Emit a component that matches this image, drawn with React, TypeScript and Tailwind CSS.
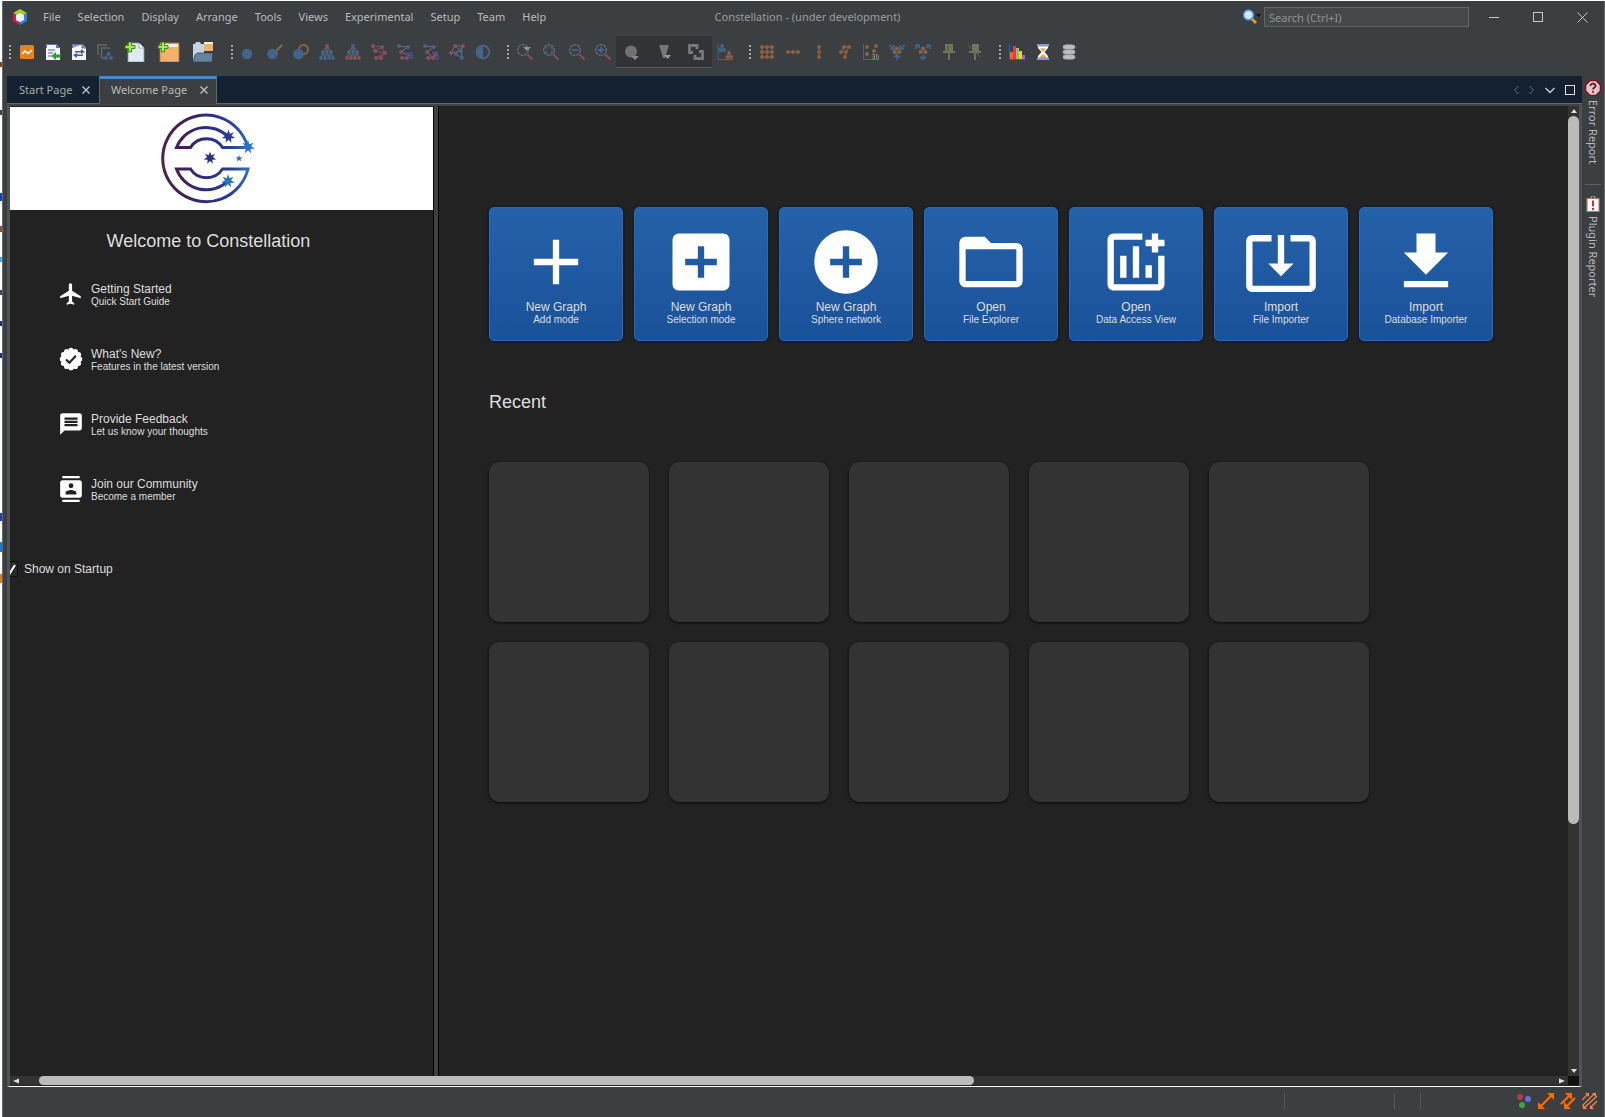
import React from 'react';

type Dot = [number, number, string?];

const BLUE = '#45638d';
const PINK = '#8b5060';
const BROWN = '#8a6142';

function Svg({ children, size = 'size-4', box = '0 0 16 16' }: { children: React.ReactNode; size?: string; box?: string }) {
  return (
    <svg className={`${size} shrink-0`} viewBox={box} fill="none" aria-hidden="true">
      {children}
    </svg>
  );
}

function Network({ dots, links, line = '#6d7275', r = 1.9 }: { dots: Dot[]; links?: string; line?: string; r?: number }) {
  return (
    <>
      {links && <path d={links} stroke={line} strokeWidth="1" />}
      {dots.map(([x, y, c], i) => (
        <circle key={i} cx={x} cy={y} r={r} fill={c ?? BROWN} />
      ))}
    </>
  );
}

function Lens({ children }: { children?: React.ReactNode }) {
  return (
    <Svg>
      <path d="M10.500 10.500l5 5" stroke={PINK} strokeWidth="1.800" />
      <circle cx="6" cy="6" r="5.300" stroke="#68717d" strokeWidth="1.200" strokeDasharray="3 0.8" />
      {children}
    </Svg>
  );
}

const treeLinks = 'M8 2L4 8L2 14M8 2l4 6l2 6M8 2v6M8 8l-2 6M8 8l2 6M4 8l2 6M12 8l-2 6';

const fileIcons = [
  {
    label: 'Open graph view',
    icon: (
      <Svg>
        <rect x="1" y="1" width="14" height="14" rx="1.500" fill="#e8821e" />
        <path d="M3 10l3-3 3 2.500L13 6" stroke="#fff" strokeWidth="1.400" />
      </Svg>
    ),
  },
  {
    label: 'Import document',
    icon: (
      <Svg>
        <path d="M1 0h10l4 4v12H1z" fill="#f4f5fa" />
        <path d="M1.500 4V.5H11l3.500 3.500" stroke="#6470a8" />
        <path d="M11 0v4h4" fill="#6470a8" />
        <path d="M3 6h7M3 9h5M3 12h4" stroke="#5c67a0" strokeWidth="1.200" />
        <path d="M16 10.500h-5V8L6.500 12 11 16v-2.500h5z" fill="#2ba02b" />
      </Svg>
    ),
  },
  {
    label: 'Convert document',
    icon: (
      <Svg>
        <path d="M1 0h10l4 4v12H1z" fill="#f4f5fa" />
        <path d="M11 0v4h4M1.500 4V.5H11" stroke="#6470a8" fill="#8c95c0" />
        <path d="M4 7h6V5l4 3-4 2V8.500H4zM12 12H6v2l-4-3 4-2v1.500h6z" fill="#4c5796" />
      </Svg>
    ),
  },
  {
    label: 'Copy schema',
    icon: (
      <Svg>
        <path d="M1 11V1h9M4.500 14V4H13M4.500 14H8" stroke="#65686b" strokeWidth="1.500" />
        <Network r={2} dots={[[11.5, 10, BLUE], [9, 14, BLUE], [14, 14, BLUE]]} />
      </Svg>
    ),
  },
];

const plusBadge = <path d="M3.500 0h3v3.500H10v3H6.500V10h-3V6.500H0v-3h3.500z" fill="#a6e85a" stroke="#3d8c14" strokeWidth="1" />;

const bigIcons = [
  {
    label: 'New graph',
    icon: (
      <Svg size="size-5" box="0 0 20 20">
        <path d="M3 1h11l5 5v14H3z" fill="#dfeaf2" stroke="#8b9aa4" strokeWidth=".8" />
        <path d="M14 1v5h5" fill="#f8fbfd" stroke="#8b9aa4" strokeWidth=".8" />
        {plusBadge}
      </Svg>
    ),
  },
  {
    label: 'New project',
    icon: (
      <Svg size="h-5 w-[22px]" box="0 0 22 20">
        <path d="M2 1h19v19H2z" fill="#f0b268" stroke="#b17a3a" strokeWidth=".8" />
        <path d="M3 2h17v3H3z" fill="#fff0d6" />
        {plusBadge}
      </Svg>
    ),
  },
  {
    label: 'Open project',
    icon: (
      <Svg size="h-5 w-[22px]" box="0 0 22 20">
        <path d="M1 19V2h2l1-2h4l1 2h3v17z" fill="#c7d3e2" />
        <path d="M12 0h9v9h-9z" fill="#f0b468" />
        <path d="M12 0h9v2h-9z" fill="#fff0d6" />
        <path d="M1 20l2-7 2-2h16l-1 9z" fill="#67849e" stroke="#2d4253" strokeWidth=".7" />
      </Svg>
    ),
  },
];

const graphIcons = [
  { label: 'Add nodes', icon: <Svg><circle cx="6" cy="10" r="5.300" fill={BLUE} /></Svg> },
  {
    label: 'Add transactions',
    icon: <Svg><path d="M7 9l8-8" stroke="#8c6a48" strokeWidth="1.800" /><circle cx="5.500" cy="10" r="5.300" fill={BLUE} /></Svg>,
  },
  {
    label: 'Add loops',
    icon: <Svg><circle cx="10.500" cy="5.500" r="4.500" stroke={BROWN} strokeWidth="2" /><circle cx="5.500" cy="10" r="5.300" fill={BLUE} /></Svg>,
  },
  {
    label: 'Select all',
    icon: <Svg><Network links={treeLinks} dots={[[8, 2, PINK], [4, 8, BLUE], [8, 8, BLUE], [12, 8, BLUE], [2, 14, BLUE], [6, 14, BLUE], [10, 14, BLUE], [14, 14, BLUE]]} /></Svg>,
  },
  {
    label: 'Select leaves',
    icon: <Svg><Network links={treeLinks} dots={[[8, 2, BLUE], [4, 8, BLUE], [8, 8, BLUE], [12, 8, BLUE], [2, 14, PINK], [6, 14, PINK], [10, 14, PINK], [14, 14, PINK]]} /></Svg>,
  },
  {
    label: 'Select neighbours',
    icon: <Svg><Network line={PINK} links="M2 2l9 1 3 6-4 5H5l9-5L4 7l7-4M2 2l2 5" dots={[[2, 2, PINK], [11, 3, PINK], [4, 7, PINK], [14, 9, PINK], [5, 14, PINK], [10, 14, PINK]]} /></Svg>,
  },
  {
    label: 'Select component',
    icon: <Svg><Network links="M2 2l9 1M4 8l10 4M5 14h5M4 8l7-5" dots={[[2, 2, BLUE], [11, 3, BLUE], [4, 8, PINK], [5, 14, PINK], [10, 14, PINK]]} /><circle cx="13" cy="11.500" r="2.400" stroke="#4b4f9a" strokeWidth="1.500" /></Svg>,
  },
  {
    label: 'Select backbone',
    icon: <Svg><Network links="M2 2l9 1M4 8l7-5M4 8l6 6M5 14h5" dots={[[2, 2, BLUE], [11, 3, BLUE], [4, 8, PINK], [5, 14, PINK], [10, 14, PINK], [12, 11, PINK]]} /><path d="M9 8.500h5v5M12 15h4v-4" stroke="#4b4f9a" strokeWidth="1.500" /></Svg>,
  },
  {
    label: 'Select path',
    icon: <Svg><Network links="M6 2L2 9l10-2M14 2L7 10l6 4M6 2l6 5 2-5M12 7l1 7M6 2h8" dots={[[6, 2, PINK], [14, 2, PINK], [2, 9, PINK], [12, 7, BLUE], [7, 10, BLUE], [13, 14, BLUE]]} /></Svg>,
  },
  {
    label: 'Invert selection',
    icon: <Svg><circle cx="8" cy="8" r="6.300" stroke={BLUE} strokeWidth="2" /><path d="M8 1a7 7 0 0 0 0 14z" fill={BLUE} /></Svg>,
  },
];

const zoomIcons = [
  { label: 'Reset view', icon: <Lens><path d="M6 3h8l-4 4z" fill="#8c8f91" /></Lens> },
  { label: 'Zoom to selection', icon: <Lens><path d="M3 5V3h2M7 3h2v2M9 7v2H7M5 9H3V7" stroke="#4c5f96" strokeWidth="1.200" /></Lens> },
  { label: 'Zoom out', icon: <Lens><path d="M3 6h6" stroke="#4c5f96" strokeWidth="1.800" /></Lens> },
  { label: 'Zoom in', icon: <Lens><path d="M3 6h6M6 3v6" stroke="#4c5f96" strokeWidth="1.800" /></Lens> },
];

const drawIcons = [
  { label: 'Draw nodes', icon: <Svg><circle cx="7" cy="7.500" r="6" fill="#717171" /><path d="M7 12h8l-4 4z" fill="#8b8b8b" /></Svg> },
  { label: 'Draw blazes', icon: <Svg><path d="M3 1h10L9 14H7z" fill="#767676" /><path d="M8 11h7l-3.500 4z" fill="#9a9a9a" /></Svg> },
  { label: 'Draw connections', icon: <Svg><path d="M5 8.500H1.500v-7h7.500V5M7 11v3.500h7.500v-7H11" stroke="#777" strokeWidth="2.800" /></Svg> },
];

const plotIcon = (
  <Svg>
    <path d="M1 0v15.500h15" stroke={BLUE} />
    <Network links="M5 2v6M12 9v5" dots={[[5, 2, BLUE], [3, 6, BLUE], [7, 6, BLUE], [12, 9], [10.5, 13], [14, 13]]} />
  </Svg>
);

const layoutIcons = [
  {
    label: 'Arrange in grid',
    icon: <Svg><Network r={2} line={BROWN} links="M3 3h10v10H3zM8 3v10M3 8h10" dots={[[3, 3], [8, 3], [13, 3], [3, 8], [8, 8], [13, 8], [3, 13], [8, 13], [13, 13]]} /></Svg>,
  },
  { label: 'Arrange in row', icon: <Svg><Network r={2} line={BROWN} links="M2 8h12" dots={[[3, 8], [8, 8], [13, 8]]} /></Svg> },
  { label: 'Arrange in column', icon: <Svg><Network r={2} line={BROWN} links="M8 2v12" dots={[[8, 3], [8, 8], [8, 13]]} /></Svg> },
  { label: 'Arrange in tree', icon: <Svg><Network r={2} line={BROWN} links="M12 3L9 8M8 3h4M7 3L4 8h5l-1 5" dots={[[7, 3], [12, 3], [4, 8], [9, 8], [8, 13]]} /></Svg> },
  {
    label: 'Arrange in 3D',
    icon: (
      <Svg>
        <path d="M.5 0v15.500H16" stroke={BLUE} />
        <Network r={2} dots={[[4, 3], [13, 2], [11, 7], [4, 10]]} />
        <path d="M9 10.500h2.500v4.500H9M9.500 12.800h2M13.500 10.500v4.500h1l1-1v-2.500l-1-1z" stroke="#84878a" />
      </Svg>
    ),
  },
  {
    label: 'Contract graph',
    icon: <Svg><Network r={2} dots={[[8, 4.5], [5.5, 8], [10.5, 8]]} links="M5 8h6" line={BROWN} /><path d="M0 1l4 3M16 1l-4 3M1 5h4V1M15 5h-4V1M8 16v-5M5 13.500l3-3 3 3" stroke={BLUE} strokeWidth="1.600" /></Svg>,
  },
  {
    label: 'Expand graph',
    icon: <Svg><Network r={2} dots={[[8, 4.5], [5.5, 8], [10.5, 8]]} links="M5 8h6" line={BROWN} /><path d="M1 1l4 3M15 1l-4 3M1 5V1h4M15 5V1h-4M8 11v4M5 12.500l3 3 3-3" stroke={BLUE} strokeWidth="1.600" /></Svg>,
  },
  { label: 'Pin nodes', icon: <Svg><path d="M8 9v7" stroke="#777a7c" strokeWidth="1.600" /><path d="M4 0h8v7h2v2H2V7h2z" fill="#70755a" /><path d="M7 2v5" stroke="#464a3a" /></Svg> },
  { label: 'Unpin nodes', icon: <Svg><path d="M8 9v7" stroke="#777a7c" strokeWidth="1.600" /><path d="M5 0h7v7h2v2H2V7h3z" fill="#70755a" /><path d="M1 1l12 12" stroke={PINK} /></Svg> },
];

const viewIcons = [
  {
    label: 'Histogram',
    icon: (
      <Svg>
        <path d="M1 8h3v7H1z" fill="#ff6a00" /><path d="M4 2h3v13H4z" fill="#e8306a" /><path d="M7 4h3v11H7z" fill="#9bbf5a" />
        <path d="M10 7h3v8h-3z" fill="#e6d62c" /><path d="M13 11h3v4h-3z" fill="#a35fe0" /><path d="M.5 0v15.500H16" stroke="#2458d8" />
      </Svg>
    ),
  },
  {
    label: 'Timeline',
    icon: (
      <Svg>
        <path d="M3 2h10v2L9.500 8 13 12v2H3v-2l3.500-4L3 4z" fill="#fff" /><path d="M5 4.500h6L8 8zM4 14l4-4 4 4z" fill="#f09a4a" />
        <path d="M2 0h12v2.500H2zM2 13.500h12V16H2z" fill="#9494cc" />
      </Svg>
    ),
  },
  {
    label: 'Data access',
    icon: (
      <Svg>
        {[1, 6, 11].map((y) => (
          <path key={y} d={`M2 ${y + 1}c0-2 12-2 12 0v2c0 2-12 2-12 0z`} fill="#b9bcc0" stroke="#7e8286" strokeWidth=".6" />
        ))}
      </Svg>
    ),
  },
];

const ICONS = {
  add: 'M19 13h-6v6h-2v-6H5v-2h6V5h2v6h6z',
  addBox: 'M19 3H5a2 2 0 0 0-2 2v14a2 2 0 0 0 2 2h14c1.100 0 2-.9 2-2V5c0-1.100-.9-2-2-2zm-2 10h-4v4h-2v-4H7v-2h4V7h2v4h4z',
  addCircle: 'M12 2C6.480 2 2 6.480 2 12s4.480 10 10 10 10-4.480 10-10S17.520 2 12 2zm5 11h-4v4h-2v-4H7v-2h4V7h2v4h4z',
  folder: 'M20 6h-8l-2-2H4c-1.100 0-1.990.9-1.990 2L2 18c0 1.100.9 2 2 2h16c1.100 0 2-.9 2-2V8c0-1.100-.9-2-2-2zm0 12H4V8h16z',
  chart: 'M14 3H5c-1.100 0-2 .9-2 2v14c0 1.100.9 2 2 2h14c1.100 0 2-.9 2-2v-9h-2v9H5V5h9zM7 10h2v7H7zM11 7h2v10h-2zM15 13h2v4h-2zM17 3h2v2h2v2h-2v2h-2V7h-2V5h2z',
  importFile: 'M12 16.500l4-4h-3v-9h-2v9H8zm9-13h-6v1.990h6v14.030H3V5.490h6V3.500H3c-1.100 0-2 .9-2 2v14c0 1.100.9 2 2 2h18c1.100 0 2-.9 2-2v-14c0-1.100-.9-2-2-2z',
  download: 'M19 9h-4V3H9v6H5l7 7zM5 18v2h14v-2z',
  flight: 'M21 16v-2l-8-5V3.500c0-.83-.67-1.500-1.500-1.500S10 2.670 10 3.500V9l-8 5v2l8-2.500V19l-2 1.500V22l3.500-1 3.500 1v-1.500L13 19v-5.500z',
  message: 'M20 2H4c-1.100 0-1.990.9-1.990 2L2 22l4-4h14c1.100 0 2-.9 2-2V4c0-1.100-.9-2-2-2zm-2 12H6v-2h12zm0-3H6V9h12zm0-3H6V6h12z',
  contacts:
    'M20 0H4v2h16zM4 24h16v-2H4zM20 4H4c-1.100 0-2 .9-2 2v12c0 1.100.9 2 2 2h16c1.100 0 2-.9 2-2V6c0-1.100-.9-2-2-2zm-8 2.750a2.250 2.250 0 1 1 0 4.500 2.250 2.250 0 0 1 0-4.500zM17 17H7v-1.500c0-1.670 3.330-2.500 5-2.500s5 .83 5 2.500z',
};

const actions = [
  { title: 'New Graph', sub: 'Add mode', d: ICONS.add },
  { title: 'New Graph', sub: 'Selection mode', d: ICONS.addBox },
  { title: 'New Graph', sub: 'Sphere network', d: ICONS.addCircle },
  { title: 'Open', sub: 'File Explorer', d: ICONS.folder },
  { title: 'Open', sub: 'Data Access View', d: ICONS.chart },
  { title: 'Import', sub: 'File Importer', d: ICONS.importFile },
  { title: 'Import', sub: 'Database Importer', d: ICONS.download },
];

function solid(d: string) {
  return <path d={d} fill="#fff" />;
}

const verified = (
  <>
    <circle cx="12" cy="12" r="9" fill="#fff" />
    {Array.from({ length: 12 }, (_, i) => (
      <circle key={i} cx={12 + 8 * Math.cos((i * Math.PI) / 6)} cy={12 + 8 * Math.sin((i * Math.PI) / 6)} r="2.400" fill="#fff" />
    ))}
    <path d="M7.500 12.500l3 3 6-6.500" stroke="#222" strokeWidth="2" />
  </>
);

const links = [
  { title: 'Getting Started', sub: 'Quick Start Guide', icon: solid(ICONS.flight) },
  { title: "What's New?", sub: 'Features in the latest version', icon: verified },
  { title: 'Provide Feedback', sub: 'Let us know your thoughts', icon: solid(ICONS.message) },
  { title: 'Join our Community', sub: 'Become a member', icon: solid(ICONS.contacts) },
];

const menus = ['File', 'Selection', 'Display', 'Arrange', 'Tools', 'Views', 'Experimental', 'Setup', 'Team', 'Help'];

function star(cx: number, cy: number, r: number, points: number) {
  return Array.from({ length: points * 2 }, (_, i) => {
    const a = (i * Math.PI) / points - Math.PI / 2;
    const q = i % 2 ? r * 0.45 : r;
    return `${(cx + q * Math.cos(a)).toFixed(2)},${(cy + q * Math.sin(a)).toFixed(2)}`;
  }).join(' ');
}

function Logo() {
  return (
    <svg className="h-[92px] w-[94px]" viewBox="0 0 94 92" fill="none" role="img" aria-label="Constellation">
      <defs>
        <linearGradient id="brand" gradientUnits="userSpaceOnUse" x1="0" y1="0" x2="92" y2="0">
          <stop offset="0" stopColor="#4f2450" />
          <stop offset=".22" stopColor="#43204f" />
          <stop offset=".5" stopColor="#2c2c80" />
          <stop offset=".75" stopColor="#2b3c92" />
          <stop offset="1" stopColor="#2c7cc2" />
        </linearGradient>
      </defs>
      <g stroke="url(#brand)" strokeWidth="3">
        <path d="M86.500 33A43.300 43.300 0 1 0 87 56H61.500A19 19 0 0 1 29.500 56H15.500A31.500 31.500 0 0 0 67 68" />
        <path d="M67 23.500A31.500 31.500 0 0 0 15.500 34.500H29.500A19 19 0 0 1 61.500 34.500H86" />
      </g>
      <g fill="url(#brand)">
        <polygon points={star(67.5, 23.5, 7, 7)} />
        <polygon points={star(49, 45, 6.5, 7)} />
      </g>
      <g fill="#2c74b8">
        <polygon points={star(87, 34, 7, 7)} />
        <polygon points={star(67, 68, 7, 7)} />
        <polygon points={star(78, 45.5, 3.5, 5)} />
      </g>
    </svg>
  );
}

function Grip({ first = false }: { first?: boolean }) {
  return (
    <div className={`flex shrink-0 flex-col items-end gap-0.5 pr-[3px] ${first ? 'w-[11px]' : 'w-4'}`}>
      {[0, 1, 2, 3].map((i) => (
        <span key={i} className="size-0.5 bg-[#a5a7a8]" />
      ))}
    </div>
  );
}

function Tools({ items, width = 'w-[26px]' }: { items: { label: string; icon: React.ReactNode }[]; width?: string }) {
  return (
    <>
      {items.map((t) => (
        <button key={t.label} type="button" aria-label={t.label} className={`flex h-8 shrink-0 items-center justify-center ${width}`}>
          {t.icon}
        </button>
      ))}
    </>
  );
}

function TabClose({ label }: { label: string }) {
  return (
    <button type="button" aria-label={`Close ${label}`}>
      <Svg size="size-2.5" box="0 0 10 10">
        <path d="M1.500 1.500l7 7M8.500 1.500l-7 7" stroke="#c4c4c4" strokeWidth="1.300" />
      </Svg>
    </button>
  );
}

const edgeMarks: [number, number, string][] = [
  [62, 5, '#7a4a22'], [110, 5, '#444'], [193, 8, '#1c3fb0'], [226, 6, '#8a5044'], [257, 5, '#53a7ea'], [290, 5, '#445'],
  [321, 5, '#27306e'], [353, 5, '#27306e'], [513, 8, '#2a40a8'], [542, 10, '#1f78c8'], [574, 9, '#c9812c'],
];

export default function App() {
  return (
    <div className="flex min-h-screen bg-white font-['Noto_Sans',sans-serif] text-[11px] leading-4 text-[#bbbbbb]">
      <svg className="w-0.5 shrink-0" aria-hidden="true">
        {edgeMarks.map(([y, h, c]) => (
          <rect key={y} x="0" y={y} width="2" height={h} fill={c} />
        ))}
      </svg>
      <div className="mt-px flex min-w-0 flex-1 flex-col border-r border-l border-[#66696b] bg-[#3c3f41]">
        <header className="grid h-8 grid-cols-[1fr_auto_1fr] items-center pl-2">
          <div className="flex items-center">
            <Svg size="size-[18px]" box="0 0 18 18">
              <path d="M9 1l7 4-7 4-7-4z" fill="#a9c92f" />
              <path d="M2 5l7 4v8l-7-4z" fill="#d8184f" />
              <path d="M16 5l-7 4v8l7-4z" fill="#2788dd" />
              <path d="M9 5l4 2v5l-4 2-4-2V7z" fill="#e6eef2" />
              <path d="M5 7l4 2v5l-4-2z" fill="#fff" />
            </Svg>
            <nav className="ml-3.5 flex gap-[17px]">
              {menus.map((m) => (
                <button key={m} type="button">{m}</button>
              ))}
            </nav>
          </div>
          <h1 className="text-center text-[#9a9c9d]">Constellation - (under development)</h1>
          <div className="flex items-center justify-end">
            <button type="button" aria-label="Search options" className="flex items-center">
              <Svg size="h-4 w-[22px]" box="0 0 22 16">
                <path d="M9 9l5 5" stroke="#e09a1c" strokeWidth="3" />
                <circle cx="6.500" cy="6" r="5" fill="#cfe8ff" stroke="#3d8ce0" strokeWidth="1.500" />
                <path d="M14 5h5l-2.500 3z" fill="#111" />
              </Svg>
            </button>
            <input
              type="text"
              aria-label="Search"
              placeholder="Search (Ctrl+I)"
              className="h-5 w-[205px] border border-[#646668] bg-[#45494a] px-1 text-[11px] outline-none placeholder:text-[#919394]"
            />
            <button type="button" aria-label="Minimize" className="ml-[13px] flex h-8 w-6 items-center justify-center">
              <span className="h-px w-2.5 bg-[#c8c8c8]" />
            </button>
            <button type="button" aria-label="Maximize" className="ml-5 flex h-8 w-6 items-center justify-center">
              <span className="size-2.5 border border-[#c8c8c8]" />
            </button>
            <button type="button" aria-label="Close" className="mr-2.5 ml-5 flex h-8 w-6 items-center justify-center">
              <Svg size="size-[11px]" box="0 0 11 11">
                <path d="M.5.5l10 10M10.500.5l-10 10" stroke="#c8c8c8" />
              </Svg>
            </button>
          </div>
        </header>

        <div role="toolbar" aria-label="Main toolbar" className="flex h-[43px] items-center pb-1.5">
          <Grip first />
          <Tools items={fileIcons} />
          <Tools items={bigIcons} width="w-[34px]" />
          <Grip />
          <Tools items={graphIcons} />
          <Grip />
          <Tools items={zoomIcons} />
          <div className="flex h-8 border-b border-[#5a5c5e] bg-[#313335]">
            <Tools items={drawIcons} width="w-8" />
          </div>
          <Tools items={[{ label: 'Scatter plot', icon: plotIcon }]} />
          <Grip />
          <Tools items={layoutIcons} />
          <Grip />
          <Tools items={viewIcons} />
        </div>

        <div className="flex flex-1">
          <div className="ml-1 flex min-w-0 flex-1 flex-col">
            <div className="flex h-7 items-stretch border-b border-[#646668] bg-[#132131]">
              <div className="flex w-[92px] items-center justify-between pr-2 pl-3 text-[#a8abae]">
                <button type="button">Start Page</button>
                <TabClose label="Start Page" />
              </div>
              <div className="-mb-px flex w-[118px] items-center justify-between border-x border-t-3 border-x-[#646668] border-t-[#4a88c7] bg-[#3c3f41] pr-[7px] pb-[3px] pl-[11px]">
                <button type="button">Welcome Page</button>
                <TabClose label="Welcome Page" />
              </div>
              <div className="ml-auto flex items-center gap-2.5 pr-[7px]">
                <button type="button" aria-label="Previous tab">
                  <Svg size="h-2.5 w-1.5" box="0 0 6 10"><path d="M5.500 1l-4 4 4 4" stroke="#6b747c" /></Svg>
                </button>
                <button type="button" aria-label="Next tab">
                  <Svg size="h-2.5 w-1.5" box="0 0 6 10"><path d="M.5 1l4 4-4 4" stroke="#6b747c" /></Svg>
                </button>
                <button type="button" aria-label="Tab list">
                  <Svg size="size-2.5" box="0 0 10 10"><path d="M.5 3L5 7.500 9.500 3" stroke="#d0d0d0" strokeWidth="1.300" /></Svg>
                </button>
                <button type="button" aria-label="Maximize window" className="size-2.5 border border-[#e0e0e0]" />
              </div>
            </div>

            <div className="grid flex-1 grid-cols-[minmax(0,1fr)_11px] grid-rows-[1fr_9px] border-x-3 border-t-2 border-b border-x-[#505254] border-t-[#444] border-b-white bg-[#222222] pb-px font-['Liberation_Sans',sans-serif] text-xs leading-[14px] text-[#dedede]">
              <main className="flex min-w-0">
                <aside className="mt-px w-[423px] shrink-0 overflow-hidden">
                  <div className="flex h-[103px] items-center justify-center bg-white pr-7">
                    <Logo />
                  </div>
                  <h2 className="mt-[19px] pr-[26px] text-center text-lg leading-6">Welcome to Constellation</h2>
                  <ul className="mt-7 flex flex-col gap-[38px] pl-12">
                    {links.map((l) => (
                      <li key={l.title}>
                        <a href="#" className="flex items-start gap-[7px]">
                          <Svg size="size-[26px]" box="0 0 24 24">{l.icon}</Svg>
                          <span className="pt-px">
                            <span className="block">{l.title}</span>
                            <span className="block text-[10px] leading-3">{l.sub}</span>
                          </span>
                        </a>
                      </li>
                    ))}
                  </ul>
                  <label className="mt-[58px] flex items-center gap-1.5">
                    <span className="-ml-2 grid size-4 rounded-xs border border-[#0d0d0d] bg-[#2b2b2b]">
                      <input type="checkbox" defaultChecked className="peer col-start-1 row-start-1 size-full appearance-none" />
                      <svg viewBox="0 0 14 14" className="col-start-1 row-start-1 hidden size-full peer-checked:block" fill="none" aria-hidden="true">
                        <path d="M4 7l3 4 5-8" stroke="#fff" strokeWidth="2" />
                      </svg>
                    </span>
                    Show on Startup
                  </label>
                </aside>
                <div role="separator" className="w-1.5 shrink-0 border-x border-black bg-[#3f3f3f]" />
                <section className="min-w-0 flex-1 overflow-hidden pt-[101px] pl-[50px]">
                  <div className="flex gap-[11px]">
                    {actions.map((a) => (
                      <button
                        key={a.sub}
                        type="button"
                        className="flex size-[134px] shrink-0 flex-col items-center rounded-[5px] border border-[#2c69b2] bg-linear-to-b from-[#2561aa] to-[#1a5299] pt-4 shadow-[0_0_2px_1px_rgba(8,28,54,0.8)]"
                      >
                        <Svg size="size-[76px]" box="0 0 24 24">{solid(a.d)}</Svg>
                        <span>{a.title}</span>
                        <span className="text-[10px] leading-3">{a.sub}</span>
                      </button>
                    ))}
                  </div>
                  <h2 className="mt-[49px] text-lg leading-6">Recent</h2>
                  <div className="mt-12 grid grid-cols-[repeat(5,160px)] gap-5">
                    {Array.from({ length: 10 }, (_, i) => (
                      <button
                        key={i}
                        type="button"
                        aria-label={`Recent graph ${i + 1}`}
                        className="h-40 rounded-[10px] bg-[#333333] shadow-[0_1px_3px_rgba(0,0,0,0.7)]"
                      />
                    ))}
                  </div>
                </section>
              </main>

              <div className="flex flex-col items-center bg-[#333]">
                <Svg size="size-2.5" box="0 0 10 10"><path d="M5 3l3 4H2z" fill="#ddd" /></Svg>
                <div className="h-[73%] w-full rounded-full bg-[#bbbbbb]" />
                <span className="mt-auto flex">
                  <Svg size="size-2.5" box="0 0 10 10"><path d="M5 7l3-4H2z" fill="#ddd" /></Svg>
                </span>
              </div>
              <div className="flex items-center bg-[#333]">
                <Svg size="h-2.5 w-[29px]" box="0 0 29 10"><path d="M3 5l6-2.500v5z" fill="#ddd" /></Svg>
                <div className="h-full w-[60%] rounded-full bg-[#bbbbbb]" />
                <span className="ml-auto flex">
                  <Svg size="size-2.5" box="0 0 10 10"><path d="M7 5L1 2.500v5z" fill="#ddd" /></Svg>
                </span>
              </div>
              <div className="bg-[#111]" />
            </div>
          </div>

          <aside className="flex w-[22px] shrink-0 flex-col items-center pt-1">
            <button type="button" className="flex flex-col items-center gap-1">
              <Svg>
                <path d="M5 .5h6L15.500 5v6L11 15.500H5L.5 11V5z" fill="#d9c6ca" stroke="#7c1020" strokeWidth="1.600" />
                <path d="M5.500 6c0-3.500 5-3 5 0 0 1.500-2.500 1.500-2.500 3.500M8 11v1.800" stroke="#7c1020" strokeWidth="1.800" />
              </Svg>
              <span className="[writing-mode:vertical-rl]">Error Report</span>
            </button>
            <span className="mt-5 h-px w-4 bg-[#5c5f61]" />
            <button type="button" className="mt-[11px] flex flex-col items-center gap-1">
              <Svg>
                <path d="M2 2.500h12v13H2z" fill="#fff" stroke="#b07a60" strokeWidth="1.200" />
                <path d="M6 2a2 2 0 0 1 4 0" stroke="#a0a3a5" strokeWidth="1.200" />
                <path d="M8 4.500v6M8 12v2" stroke="#e0204c" strokeWidth="2" />
              </Svg>
              <span className="[writing-mode:vertical-rl]">Plugin Reporter</span>
            </button>
          </aside>
        </div>

        <footer className="flex h-[30px] items-center justify-end pr-1.5 pb-0.5">
          <span className="mr-[109px] h-4 w-px bg-[#55585a]" />
          <span className="mr-[25px] h-4 w-px bg-[#55585a]" />
          <span className="mr-[95px] h-4 w-px bg-[#55585a]" />
          <div className="flex gap-1.5">
            <button type="button" aria-label="Nodes">
              <Svg><circle cx="4" cy="4" r="3" fill="#b53c3c" /><circle cx="12" cy="6" r="3" fill="#6b6be0" /><circle cx="6" cy="12" r="3" fill="#3ca53c" /></Svg>
            </button>
            <button type="button" aria-label="Edges">
              <Svg><path d="M3 13L13 3" stroke="#ff6a00" strokeWidth="2.200" /><path d="M16 0v7L9 0zM0 16V9l7 7z" fill="#ff6a00" /></Svg>
            </button>
            <button type="button" aria-label="Links">
              <Svg><path d="M1 11l8-8M7 13l8-8" stroke="#ff6a00" strokeWidth="2.200" /><path d="M12 0v7L5 0zM4 16V9l7 7z" fill="#ff6a00" /></Svg>
            </button>
            <button type="button" aria-label="Transactions">
              <Svg><path d="M0 7l6-6M0 13L12 1M2 15L15 3M8 15l7-7" stroke="#f08a48" strokeWidth="1.200" /><path d="M7 0v4L3 0zM14 0v4l-4-4zM1 16v-4l4 4zM8 16v-4l4 4z" fill="#f08a48" /></Svg>
            </button>
          </div>
        </footer>
      </div>
    </div>
  );
}
